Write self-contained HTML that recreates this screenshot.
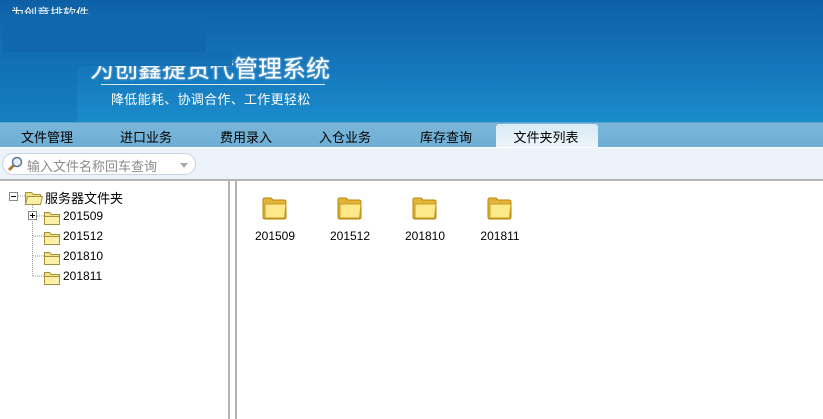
<!DOCTYPE html>
<html><head><meta charset="utf-8"><style>
*{margin:0;padding:0;box-sizing:border-box}
body{width:823px;height:419px;overflow:hidden;background:#fff;font-family:"Liberation Sans","Noto Sans CJK SC","WenQuanYi Zen Hei",sans-serif;position:relative;font-size:12px;color:#000}
.hdr{position:absolute;left:0;top:0;width:823px;height:122px;background:linear-gradient(180deg,#0e60a6 0%,#1474ba 50%,#1a8ccc 100%);overflow:hidden}
.blk{position:absolute;left:3px;top:14px;width:203px;height:38px;background:#0f67ac}
.cov{position:absolute;left:0;top:52px;width:232px;height:14px;background:linear-gradient(180deg,#116dB2,#1271b6)}
.blk2{position:absolute;left:0;top:66px;width:77px;height:56px;background:linear-gradient(180deg,#1171b5,#167fc2)}
.t0{position:absolute;left:11px;top:3px;color:#fff;font-size:13px}
.t1{position:absolute;left:90px;top:49px;color:#fff;font-size:24px;text-shadow:0 0 2px #cde}
.line{position:absolute;left:101px;top:84px;width:224px;height:1px;background:#dde8f2}
.t2{position:absolute;left:111px;top:89px;color:#fff;font-size:13px;letter-spacing:0.3px}
.tabs{position:absolute;left:0;top:122px;width:823px;height:25px;background:linear-gradient(180deg,#7ab6da,#6eaed4);border-top:1px solid #5da2cd}
.tab{position:absolute;top:4px;font-size:13px;width:100px;text-align:center}
.act{position:absolute;left:496px;top:1px;width:102px;height:24px;background:linear-gradient(180deg,#d8eaf5,#eef5fa);border-radius:3px 3px 0 0}
.tb{position:absolute;left:0;top:147px;width:823px;height:32px;background:#ecf3fa;border-top:1px solid #fff}
.search{position:absolute;left:2px;top:5px;width:194px;height:22px;border:1px solid #c8d3de;border-radius:11px;background:#fff}
.search span{position:absolute;left:24px;top:2px;color:#8a8a8a;font-size:13px}
.hl{position:absolute;left:0;top:179px;width:823px;height:2px;background:#b4b4b4}
.lp{position:absolute;left:228px;top:181px;width:2px;height:238px;background:#b4b4b4}
.rp{position:absolute;left:235px;top:181px;width:2px;height:238px;background:#b4b4b4}
.tree{position:absolute;font-size:12px}
.lbl{position:absolute;font-size:12px;width:60px;text-align:center}
</style></head><body>
<div class="hdr">
<div class="t0">为创意排软件</div>
<div class="t1">为创鑫捷货代管理系统</div>
<div class="blk"></div><div class="cov"></div><div class="blk2"></div>
<div class="line"></div>
<div class="t2">降低能耗、协调合作、工作更轻松</div>
</div>
<div class="tabs">
<div class="act"></div>
<div class="tab" style="left:-3px">文件管理</div>
<div class="tab" style="left:96px">进口业务</div>
<div class="tab" style="left:196px">费用录入</div>
<div class="tab" style="left:295px">入仓业务</div>
<div class="tab" style="left:396px">库存查询</div>
<div class="tab" style="left:496px">文件夹列表</div>
</div>
<div class="tb"><div class="search">
<svg style="position:absolute;left:3px;top:2px" width="18" height="17" viewBox="0 0 18 17"><line x1="3" y1="14" x2="8" y2="9" stroke="#b07a30" stroke-width="3"/><circle cx="11" cy="6" r="4.5" fill="#e6f2ff" stroke="#557799" stroke-width="1.5"/></svg>
<span>输入文件名称回车查询</span>
<svg style="position:absolute;left:177px;top:9px" width="8" height="5"><path d="M0 0h8L4 5z" fill="#aaa"/></svg>
</div></div>
<div class="hl"></div><div class="lp"></div><div class="rp"></div>

<svg style="position:absolute;left:0;top:181px" width="228" height="110">
<g stroke="#999" stroke-dasharray="1 1" fill="none">
<line x1="18" y1="15" x2="25" y2="15"/>
<line x1="32.5" y1="22" x2="32.5" y2="95"/>
<line x1="37" y1="35" x2="44" y2="35"/>
<line x1="33" y1="55" x2="44" y2="55"/>
<line x1="33" y1="75" x2="44" y2="75"/>
<line x1="33" y1="95" x2="44" y2="95"/>
</g>
<rect x="9.5" y="11.5" width="8" height="8" fill="#fff" stroke="#888"/><line x1="11" y1="15.5" x2="16" y2="15.5" stroke="#000"/>
<rect x="28.5" y="30.5" width="8" height="8" fill="#fff" stroke="#888"/><line x1="30" y1="34.5" x2="35" y2="34.5" stroke="#000"/><line x1="32.5" y1="32" x2="32.5" y2="37" stroke="#000"/>
<g transform="translate(0,1)"><path d="M25.5 10.5h6l2 2h7v10h-15z" fill="#f3e48a" stroke="#a8913a"/><path d="M27.5 14.5h15l-2 8h-15z" fill="#fbf0a8" stroke="#a8913a"/></g>
<g transform="translate(19,21)"><path d="M25.5 10.5h5l2 2h8v10h-15z" fill="#f3e48a" stroke="#a8913a"/><path d="M25.5 14.5h15v8h-15z" fill="#fbf0a8" stroke="#a8913a"/></g>
<g transform="translate(19,41)"><path d="M25.5 10.5h5l2 2h8v10h-15z" fill="#f3e48a" stroke="#a8913a"/><path d="M25.5 14.5h15v8h-15z" fill="#fbf0a8" stroke="#a8913a"/></g>
<g transform="translate(19,61)"><path d="M25.5 10.5h5l2 2h8v10h-15z" fill="#f3e48a" stroke="#a8913a"/><path d="M25.5 14.5h15v8h-15z" fill="#fbf0a8" stroke="#a8913a"/></g>
<g transform="translate(19,81)"><path d="M25.5 10.5h5l2 2h8v10h-15z" fill="#f3e48a" stroke="#a8913a"/><path d="M25.5 14.5h15v8h-15z" fill="#fbf0a8" stroke="#a8913a"/></g>
</svg>
<div class="tree" style="left:45px;top:188px;font-size:13px">服务器文件夹</div>
<div class="tree" style="left:63px;top:209px">201509</div>
<div class="tree" style="left:63px;top:229px">201512</div>
<div class="tree" style="left:63px;top:249px">201810</div>
<div class="tree" style="left:63px;top:269px">201811</div>

<svg style="position:absolute;left:0;top:190px" width="823" height="40">
<defs><g id="bf"><path d="M1 5 q0-2 2-2h6l2 2h11q2 0 2 2v15q0 2-2 2H3q-2 0-2-2z" fill="#e3b43a" stroke="#b8860b"/><path d="M3 9h21l-1.5 14H3z" fill="#fde98a" stroke="#c99a20"/></g></defs>
<use href="#bf" x="262" y="5"/><use href="#bf" x="337" y="5"/><use href="#bf" x="412" y="5"/><use href="#bf" x="487" y="5"/>
</svg>
<div class="lbl" style="left:245px;top:229px">201509</div>
<div class="lbl" style="left:320px;top:229px">201512</div>
<div class="lbl" style="left:395px;top:229px">201810</div>
<div class="lbl" style="left:470px;top:229px">201811</div>
</body></html>
